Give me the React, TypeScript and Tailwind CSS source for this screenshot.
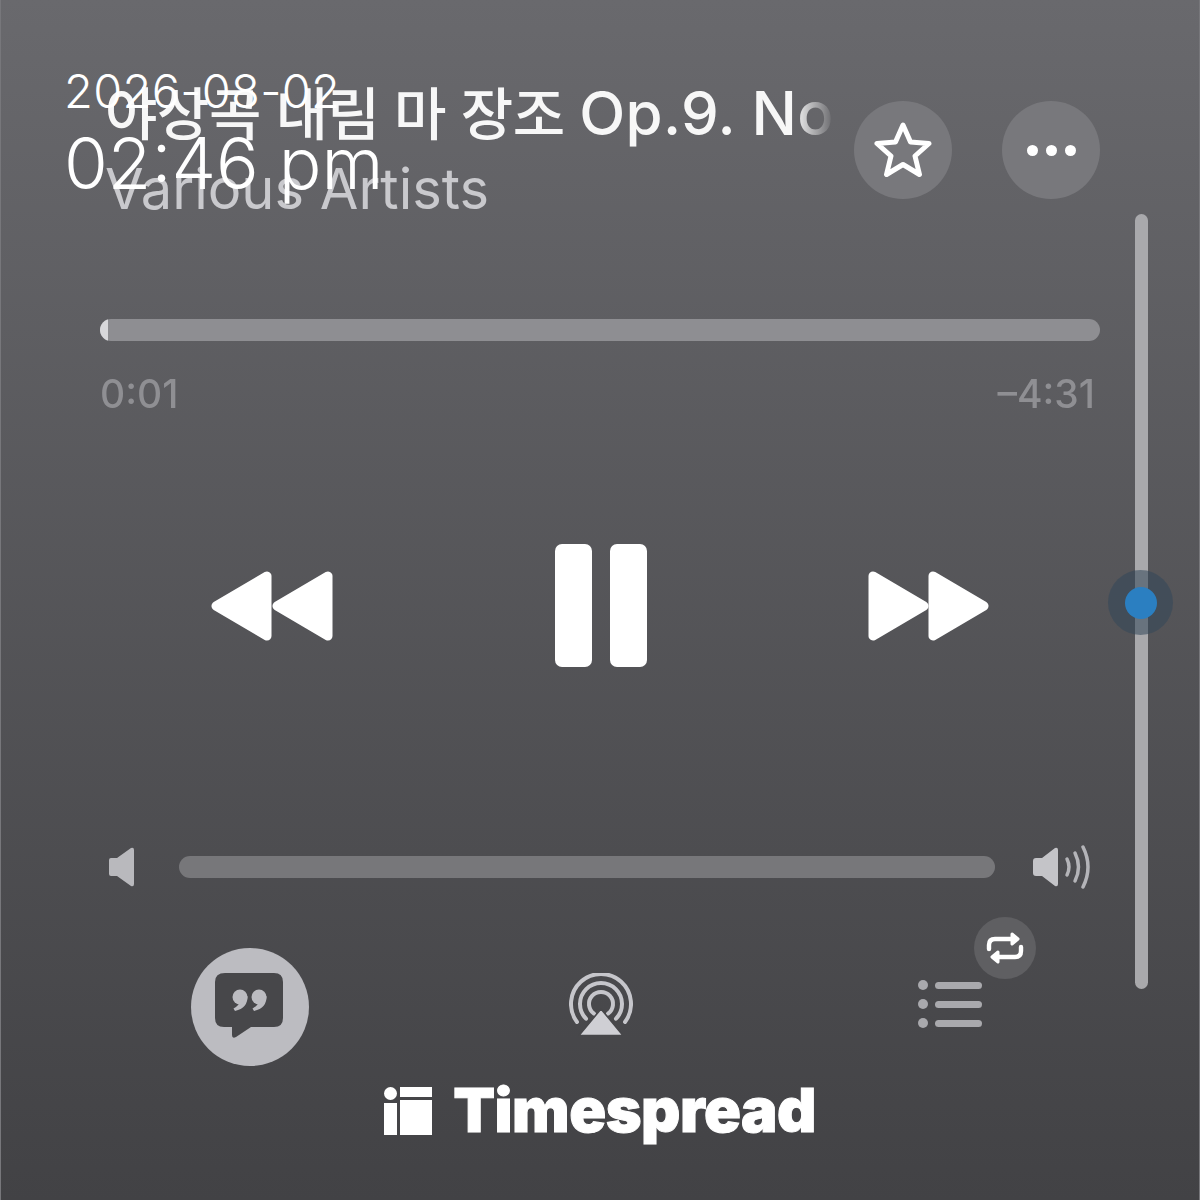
const inter = "font-['Inter','Liberation_Sans',sans-serif]";

function Rewind() {
  return (
    <svg width="123" height="72" viewBox="0 0 123 72" fill="white" stroke="white" strokeWidth="9" strokeLinejoin="round" className="blur-[0.4px]">
      <path d="M6 36 L57 6 L57 66 Z" />
      <path d="M67 36 L118 6 L118 66 Z" />
    </svg>
  );
}

function Forward() {
  return (
    <svg width="122" height="72" viewBox="0 0 122 72" fill="white" stroke="white" strokeWidth="9" strokeLinejoin="round" className="blur-[0.4px]">
      <path d="M5 6 L56 36 L5 66 Z" />
      <path d="M65 6 L116 36 L65 66 Z" />
    </svg>
  );
}

function StarIcon() {
  return (
    <svg width="60" height="58" viewBox="0 0 60 58" fill="none" stroke="white" strokeWidth="5" strokeLinejoin="round" className="blur-[0.3px]">
      <path d="M30 4 L37.5 21 L56 22.5 L42 35 L46.5 53.5 L30 43.5 L13.5 53.5 L18 35 L4 22.5 L22.5 21 Z" />
    </svg>
  );
}

function QuoteBubble() {
  return (
    <svg width="118" height="118" viewBox="0 0 118 118" className="blur-[0.4px]">
      <circle cx="59" cy="59" r="59" fill="#bcbcc1" />
      <path
        d="M34 25 H83 Q92 25 92 34 V70 Q92 79 83 79 H60 L45 89 Q41 91 41 87 V79 H33 Q24 79 24 70 V34 Q24 25 34 25 Z"
        fill="#47474a"
      />
      <g fill="#bcbcc1">
        <circle cx="49" cy="49" r="7.5" />
        <path d="M56.5 48 Q57 60 44 63 L42.5 60.5 Q48 58 49 53 Z" />
        <circle cx="68" cy="49" r="7.5" />
        <path d="M75.5 48 Q76 60 63 63 L61.5 60.5 Q67 58 68 53 Z" />
      </g>
    </svg>
  );
}

function AirplayIcon() {
  return (
    <svg width="64" height="63" viewBox="0 0 64 63" fill="none" stroke="#c6c6cb" strokeLinecap="round" className="blur-[0.3px]">
      <path d="M8 49 A30 30 0 1 1 56 49" strokeWidth="4" />
      <path d="M17 45.7 A21 21 0 1 1 47 45.7" strokeWidth="4" />
      <path d="M25 40.7 A12 12 0 1 1 39 40.7" strokeWidth="4" />
      <path d="M32 36 L54 62.5 H10 Z" fill="#cfcfd4" stroke="#47474a" strokeWidth="1.5" strokeLinejoin="round" />
    </svg>
  );
}

function ListIcon() {
  return (
    <div className="flex w-[64px] flex-col gap-[9px] blur-[0.3px]">
      {[0, 1, 2].map((i) => (
        <div key={i} className="flex items-center gap-[7px]">
          <div className="h-[10px] w-[10px] rounded-full bg-[#a9a9ad]" />
          <div className="h-[7px] flex-1 rounded-full bg-[#a9a9ad]" />
        </div>
      ))}
    </div>
  );
}

function RepeatIcon() {
  return (
    <svg width="38" height="34" viewBox="0 0 38 34" fill="none" stroke="white" strokeWidth="4.4" strokeLinecap="round" strokeLinejoin="round" className="blur-[0.3px]">
      <path d="M3 18 V14 Q3 8 9 8 H28" />
      <path d="M26 3 L32 8 L26 13 Z" fill="white" strokeWidth="3" />
      <path d="M35 16 V20 Q35 26 29 26 H10" />
      <path d="M12 21 L6 26 L12 31 Z" fill="white" strokeWidth="3" />
    </svg>
  );
}

function SpeakerLow() {
  return (
    <svg width="28" height="40" viewBox="0 0 28 40" fill="#b9b9bd" className="blur-[0.4px]">
      <path d="M2 13 Q2 11 4 11 H10 L24 1 Q27 0 27 3 V37 Q27 40 24 39 L10 29 H4 Q2 29 2 27 Z" />
    </svg>
  );
}

function SpeakerHigh() {
  return (
    <svg width="60" height="44" viewBox="0 0 60 44" fill="none" stroke="#b4b4b8" strokeWidth="3.5" strokeLinecap="round" className="blur-[0.4px]">
      <path d="M1 16 Q1 13 4 13 H10 L23 3 Q26 2 26 5 V39 Q26 42 23 41 L10 31 H4 Q1 31 1 28 Z" fill="#c4c4c8" stroke="none" />
      <path d="M35 14 Q39 22 35 30" />
      <path d="M43 8 Q50 22 43 36" />
      <path d="M51 2 Q61 22 51 42" />
    </svg>
  );
}

export default function App() {
  return (
    <div className={`relative h-[1200px] w-[1200px] overflow-hidden border-x border-[#77777b] bg-gradient-to-b from-[#69696d] to-[#424245] ${inter}`}>
      <div className="w-full px-[99px] pt-[80px]">
        <div className="flex h-[140px]">
          <div className="w-[740px] overflow-hidden pl-[5px] [mask-image:linear-gradient(to_right,black_94%,transparent_99.5%)]">
            <div className="whitespace-nowrap font-['Inter','Noto_Sans_CJK_KR',sans-serif] text-[57px] leading-[66px] font-medium tracking-[-0.5px] text-white opacity-95 blur-[0.6px]">
              야상곡 내림 마 장조 <span className="text-[60px] tracking-[0.3px]">Op.9. No.2</span>
            </div>
            <div className="mt-[8px] whitespace-nowrap text-[56px] leading-[66px] text-[#c9c9cd] blur-[0.6px]">
              Various Artists
            </div>
          </div>
          <div className="mt-[21px] ml-[16px] flex h-[98px] w-[98px] items-center justify-center rounded-full bg-[#78787c]">
            <StarIcon />
          </div>
          <div className="mt-[21px] ml-[50px] flex h-[98px] w-[98px] items-center justify-center gap-[8px] rounded-full bg-[#78787c]">
            <div className="h-[11px] w-[11px] rounded-full bg-white" />
            <div className="h-[11px] w-[11px] rounded-full bg-white" />
            <div className="h-[11px] w-[11px] rounded-full bg-white" />
          </div>
        </div>

        <div className="mt-[99px] h-[22px] overflow-hidden rounded-full bg-[#8e8e92]">
          <div className="h-full w-[8px] bg-[#d8d8db]" />
        </div>
        <div className="mt-[33px] flex h-[40px] items-center justify-between pr-[5px] text-[39px] leading-[40px] font-medium text-[#8f8f93] blur-[0.5px]">
          <span>0:01</span>
          <span>–4:31</span>
        </div>

        <div className="mx-[110px] mt-[130px] flex h-[123px] items-center justify-between">
          <Rewind />
          <div className="flex gap-[18px] blur-[0.3px]">
            <div className="h-[123px] w-[37px] rounded-[7px] bg-white" />
            <div className="h-[123px] w-[37px] rounded-[7px] bg-white" />
          </div>
          <Forward />
        </div>

        <div className="mt-[180px] flex h-[40px] items-center pl-[7px]">
          <SpeakerLow />
          <div className="ml-[44px] h-[22px] w-[816px] rounded-full bg-[#77777a]" />
          <div className="ml-[37px]">
            <SpeakerHigh />
          </div>
        </div>

        <div className="mt-[61px] flex h-[116px] items-start pl-[91px]">
          <QuoteBubble />
          <div className="mt-[25px] ml-[260px]">
            <AirplayIcon />
          </div>
          <div className="relative mt-[32px] ml-[285px]">
            <ListIcon />
            <div className="absolute top-[-63px] left-[56px] flex h-[62px] w-[62px] items-center justify-center rounded-full bg-[#5f5f62]">
              <RepeatIcon />
            </div>
          </div>
        </div>

        <div className="mt-[23px] flex h-[48px] items-center justify-center gap-[21px]">
          <div className="flex h-[48px] w-[48px] gap-[3px]">
            <div className="flex w-[13px] flex-col gap-[3px]">
              <div className="h-[13px] w-[13px] rounded-full bg-white" />
              <div className="flex-1 bg-white" />
            </div>
            <div className="flex flex-1 flex-col gap-[3px]">
              <div className="h-[10px] bg-white" />
              <div className="flex-1 bg-white" />
            </div>
          </div>
          <span className="mb-[2px] text-[61px] leading-[48px] font-black tracking-[-0.5px] text-white [-webkit-text-stroke:1px_white]">Timespread</span>
        </div>
      </div>

      {/* timestamp over the player */}
      <div className="absolute top-[64px] left-[63px] font-light text-white">
        <div className="text-[47px] leading-[54px] tracking-[0.3px]">2026-08-02</div>
        <div className="mt-[7px] text-[71px] leading-[76px]">02:46 pm</div>
      </div>

      {/* vertical scrubber with gaze dot */}
      <div className="absolute top-[214px] left-[1134px] h-[775px] w-[13px] rounded-full bg-[#a9a9ac]" />
      <div className="absolute top-[570px] left-[1107px] flex h-[65px] w-[65px] items-center justify-center rounded-full bg-[#33475a]/55">
        <div className="h-[32px] w-[32px] rounded-full bg-[#2b7fc1]" />
      </div>
    </div>
  );
}
